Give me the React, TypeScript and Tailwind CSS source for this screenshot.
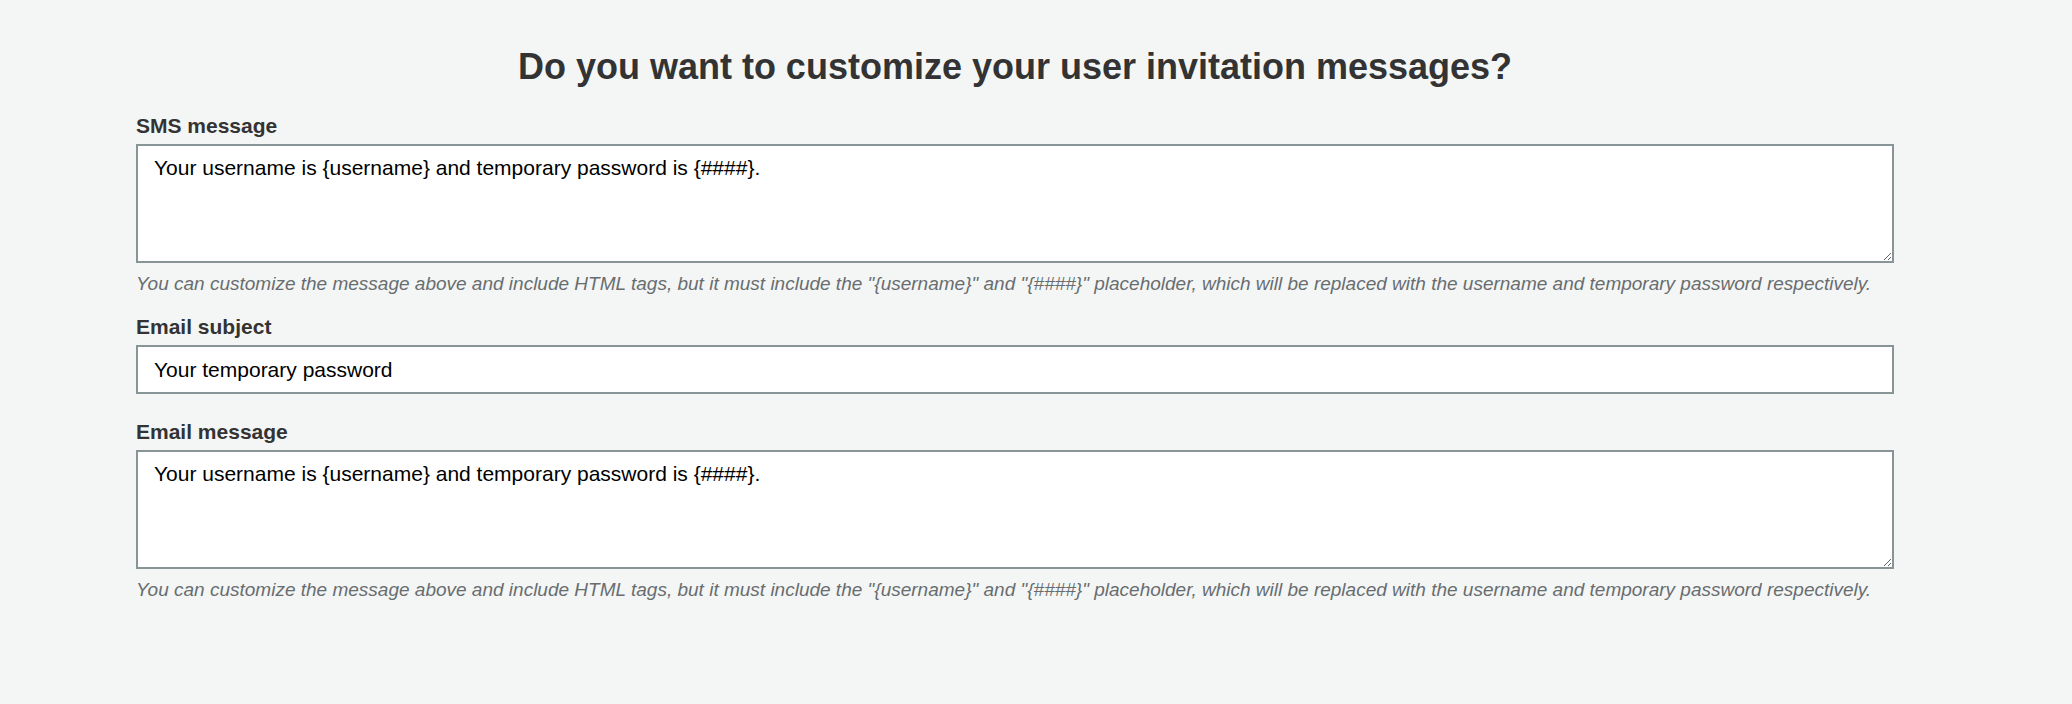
import React from 'react';

const SMS_DEFAULT = 'Your username is {username} and temporary password is {####}.';
const HINT =
  'You can customize the message above and include HTML tags, but it must include the "{username}" and "{####}" placeholder, which will be replaced with the username and temporary password respectively.';

const Label: React.FC<{ htmlFor: string; children: React.ReactNode }> = ({ htmlFor, children }) => (
  <label htmlFor={htmlFor} className="block text-[21px] leading-[24px] font-bold text-[#333333] mb-[6px]">
    {children}
  </label>
);

const Hint: React.FC = () => (
  <p className="mt-[9px] text-[19px] leading-[24px] italic text-[#686d70]">{HINT}</p>
);

const App: React.FC = () => {
  return (
    <div className="min-h-screen bg-[#f4f6f5] font-['Liberation_Sans',Arial,sans-serif]">
      <div className="ml-[136px] w-[1758px] pt-[45px]">
        <h1 className="text-center text-[36px] leading-[44px] font-bold text-[#333333]">
          Do you want to customize your user invitation messages?
        </h1>

        <div className="mt-[25px]">
          <Label htmlFor="sms">SMS message</Label>
          <textarea
            id="sms"
            defaultValue={SMS_DEFAULT}
            className="block w-full h-[119px] border-2 border-[#879596] bg-white px-[16px] py-[10px] text-[21px] leading-[24px] text-black outline-none"
          />
          <Hint />
        </div>

        <div className="mt-[19px]">
          <Label htmlFor="subject">Email subject</Label>
          <input
            id="subject"
            type="text"
            defaultValue="Your temporary password"
            className="block w-full h-[49px] border-2 border-[#879596] bg-white px-[16px] text-[21px] leading-[24px] text-black outline-none"
          />
        </div>

        <div className="mt-[26px]">
          <Label htmlFor="email">Email message</Label>
          <textarea
            id="email"
            defaultValue={SMS_DEFAULT}
            className="block w-full h-[119px] border-2 border-[#879596] bg-white px-[16px] py-[10px] text-[21px] leading-[24px] text-black outline-none"
          />
          <Hint />
        </div>
      </div>
    </div>
  );
};

export default App;
